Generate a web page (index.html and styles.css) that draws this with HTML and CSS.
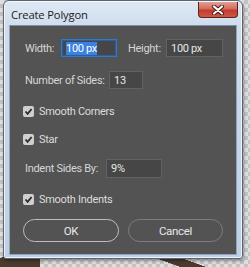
FILE: index.html
```html
<!DOCTYPE html>
<html>
<head>
<meta charset="utf-8">
<link rel="stylesheet" href="styles.css">
</head>
<body>
<div class="desk">
  <div class="window">
    <div class="titlebar">
      <span class="title">Create Polygon</span>
      <div class="close">
        <svg width="14" height="10" viewBox="0 0 14 10">
          <path d="M3 1.5 L11 8.5 M11 1.5 L3 8.5" stroke="#3a1a16" stroke-width="4" stroke-linecap="round"/>
          <path d="M3 1.5 L11 8.5 M11 1.5 L3 8.5" stroke="#ffffff" stroke-width="2.2" stroke-linecap="round"/>
        </svg>
      </div>
    </div>
    <div class="client">
      <div class="row r1">
        <span class="lbl w-lbl">Width:</span>
        <div class="field focus w56"><span class="sel">100 px</span></div>
        <span class="lbl h-lbl">Height:</span>
        <div class="field w57"><span>100 px</span></div>
      </div>
      <div class="row r2">
        <span class="lbl n-lbl">Number of Sides:</span>
        <div class="field w34"><span>13</span></div>
      </div>
      <div class="row cb r3">
        <span class="box"><svg width="11" height="11" viewBox="0 0 11 11"><path d="M2.5 5.5 L4.6 7.8 L8.6 3" fill="none" stroke="#2b2b2b" stroke-width="1.8"/></svg></span>
        <span class="cbl">Smooth Corners</span>
      </div>
      <div class="row cb r4">
        <span class="box"><svg width="11" height="11" viewBox="0 0 11 11"><path d="M2.5 5.5 L4.6 7.8 L8.6 3" fill="none" stroke="#2b2b2b" stroke-width="1.8"/></svg></span>
        <span class="cbl">Star</span>
      </div>
      <div class="row r5">
        <span class="lbl i-lbl">Indent Sides By:</span>
        <div class="field w56 h19"><span>9%</span></div>
      </div>
      <div class="row cb r6">
        <span class="box"><svg width="11" height="11" viewBox="0 0 11 11"><path d="M2.5 5.5 L4.6 7.8 L8.6 3" fill="none" stroke="#2b2b2b" stroke-width="1.8"/></svg></span>
        <span class="cbl">Smooth Indents</span>
      </div>
      <div class="row r7">
        <div class="btn ok">OK</div>
        <div class="btn cancel">Cancel</div>
      </div>
    </div>
  </div>
</div>
</body>
</html>
```
FILE: styles.css
```css
html, body {
  margin: 0;
  padding: 0;
}
body {
  width: 250px;
  height: 267px;
  overflow: hidden;
  background-color: #d4d4d4;
  background-image:
    linear-gradient(160deg, transparent 40%, #4a3b31 41%),
    linear-gradient(200deg, transparent 45%, #4a3b31 46%, #4a3b31 70%, transparent 71%),
    repeating-conic-gradient(#c2c2c2 0 25%, #dedede 0 50%);
  background-size: 40px 30px, 70px 12px, 8px 8px;
  background-position: 0 240px, 150px 255px, 0 0;
  background-repeat: no-repeat, no-repeat, repeat;
  font-family: Roboto, "Liberation Sans", Arial, sans-serif;
}
.desk {
  padding: 0 0 0 3px;
}
.window {
  width: 240px;
  height: 259px;
  box-sizing: border-box;
  border: 1px solid #5b6470;
  border-radius: 6px 6px 3px 3px;
  background: linear-gradient(180deg, #dfe9f5 0%, #cfdcec 10%, #c6d5e8 50%, #bfd0e6 100%);
  padding: 0 5px 3px 5px;
  display: flex;
  flex-direction: column;
  box-shadow: 1px 2px 3px rgba(0,0,0,0.35), inset 0 0 0 1px rgba(255,255,255,0.7);
}
.titlebar {
  height: 24px;
  display: flex;
  align-items: flex-start;
  justify-content: space-between;
}
.title {
  margin: 6px 0 0 2px;
  font-family: "Open Sans", "Liberation Sans", sans-serif;
  font-size: 11.2px;
  color: #1b1b1b;
  letter-spacing: -0.15px;
  white-space: nowrap;
}
.close {
  margin: 1px -1px 0 0;
  width: 40px;
  height: 16px;
  box-sizing: border-box;
  border: 1px solid #5a2420;
  border-top: none;
  border-radius: 0 0 4px 4px;
  background: linear-gradient(180deg, #e3a091 0%, #d66a5c 45%, #c23c2e 55%, #cf5846 100%);
  display: flex;
  align-items: center;
  justify-content: center;
}
.client {
  flex: 1;
  background: #535353;
  border: 1px solid #8fa3bb;
  border-top-color: #7e8fa3;
  padding: 0 0 0 13px;
  display: flex;
  flex-direction: column;
  color: #dadada;
  font-size: 11px;
  letter-spacing: -0.3px;
}
.row {
  display: flex;
  align-items: center;
  height: 18px;
  white-space: nowrap;
}
.row > * { flex-shrink: 0; }
.r1 { margin-top: 13px; }
.r2 { margin-top: 14px; }
.r3 { margin-top: 13px; }
.r4 { margin-top: 10px; }
.r5 { margin-top: 11px; height: 19px; }
.r6 { margin-top: 12px; }
.r7 { margin-top: 11px; height: 23px; }
.lbl {
  margin-left: 2px;
  color: #d6d6d6;
}
.w-lbl { width: 36px; }
.h-lbl { margin-left: 11px; width: 38px; }
.n-lbl { width: 84px; }
.i-lbl { width: 81px; }
.field {
  height: 18px;
  box-sizing: border-box;
  background: #464646;
  border: 1px solid #626262;
  display: flex;
  align-items: center;
  padding-left: 4px;
  color: #e6e6e6;
}
.field.focus {
  border: 1px solid #2f78d2;
  box-shadow: inset 0 0 0 1px #2a5e9e;
}
.sel {
  background: #3b82e0;
  color: #ffffff;
  line-height: 13px;
}
.w56 { width: 56px; }
.w57 { width: 57px; }
.w34 { width: 34px; }
.h19 { height: 19px; }
.cb .box {
  width: 11px;
  height: 11px;
  border-radius: 2px;
  background: #cfcfcf;
  display: flex;
}
.cbl {
  margin-left: 5px;
  color: #dcdcdc;
}
.btn {
  height: 23px;
  box-sizing: border-box;
  border-radius: 12px;
  display: flex;
  align-items: center;
  justify-content: center;
  color: #e8e8e8;
  font-size: 11.5px;
}
.ok {
  width: 96px;
  border: 1px solid #bdbdbd;
}
.cancel {
  width: 95px;
  margin-left: 9px;
  border: 1px solid #7c7c7c;
}
```
